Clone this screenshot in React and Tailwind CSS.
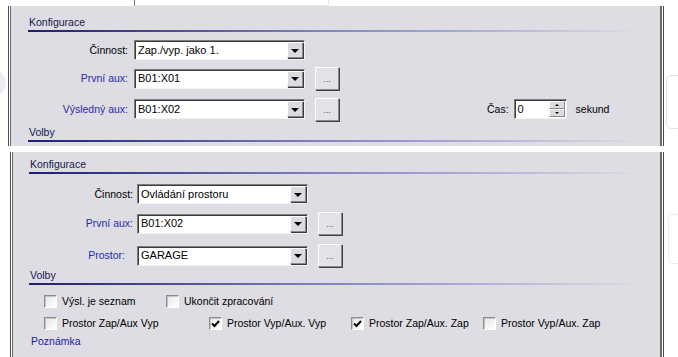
import React from "react";

function Header({ title, className }) {
  return (
    <div className={className}>
      <div className="pl-[1px] leading-[13px] text-[10.5px] text-[#17174f]">{title}</div>
      <div className="mt-[1px] h-[2px] bg-linear-to-r from-[#1e1e70] via-[#8787c2] to-[#dddde3]" />
    </div>
  );
}

function ArrowBtn() {
  return (
    <span className="w-[16px] h-[16px] mr-[1px] flex items-center justify-center bg-[#dcdce0] border border-t-white border-l-white border-b-[#8a8a8a] border-r-[#8a8a8a] shadow-[1px_1px_0_#3a3a3a]">
      <span className="mt-[1px] w-0 h-0 border-x-[4px] border-x-transparent border-t-[4px] border-t-black" />
    </span>
  );
}

function Select({ value, width }) {
  return (
    <div
      className={`${width} h-[20px] flex items-center bg-white border border-t-[#7c7c7c] border-l-[#7c7c7c] border-b-[#f4f4f4] border-r-[#f4f4f4] shadow-[inset_1px_1px_0_#3c3c3c]`}
    >
      <span className="flex-1 pl-[3px] text-[11px] text-black leading-none whitespace-nowrap">
        {value}
      </span>
      <ArrowBtn />
    </div>
  );
}

function DotsBtn() {
  return (
    <div className="w-[24px] h-[23px] ml-[10px] flex items-end justify-center pb-[5px] bg-[#e3e3e7] border border-t-white border-l-white border-b-[#8a8a8a] border-r-[#8a8a8a] shadow-[1px_1px_0_#404040]">
      <span className="text-[9px] leading-none text-[#555]">...</span>
    </div>
  );
}

function Check({ checked }) {
  return (
    <span className="w-[13px] h-[13px] shrink-0 flex items-center justify-center bg-linear-to-br from-[#e6e6e6] to-white border border-t-[#8c8c8c] border-l-[#8c8c8c] border-b-white border-r-white shadow-[inset_1px_1px_0_#c4c4c4]">
      {checked && (
        <svg width="9" height="8" viewBox="0 0 9 8">
          <path d="M1 3.5 L3.5 6 L8 1" stroke="#000" strokeWidth="2" fill="none" />
        </svg>
      )}
    </span>
  );
}

function CheckItem({ label, checked, width }) {
  return (
    <div className={`${width} flex items-center h-[13px]`}>
      <Check checked={checked} />
      <span className="ml-[5px] text-[10.5px] leading-none text-black whitespace-nowrap">{label}</span>
    </div>
  );
}

function Label({ text, blue, width, extra }) {
  return (
    <span
      className={`${width} ${extra} shrink-0 text-right text-[10.5px] leading-none whitespace-nowrap ${
        blue ? "text-[#2a2aa6]" : "text-black"
      }`}
    >
      {text}
    </span>
  );
}

function Spinner() {
  return (
    <div className="w-[53px] h-[20px] flex items-center bg-white border border-t-[#7c7c7c] border-l-[#7c7c7c] border-b-[#f4f4f4] border-r-[#f4f4f4] shadow-[inset_1px_1px_0_#3c3c3c]">
      <span className="flex-1 pl-[3px] text-[11px] leading-none">0</span>
      <div className="w-[16px] h-[16px] mr-[1px] flex flex-col">
        <span className="flex-1 flex items-center justify-center bg-[#dcdce0] border border-t-white border-l-white border-b-[#8a8a8a] border-r-[#8a8a8a]">
          <span className="w-0 h-0 border-x-[2px] border-x-transparent border-b-[2px] border-b-black" />
        </span>
        <span className="flex-1 flex items-center justify-center bg-[#dcdce0] border border-t-white border-l-white border-b-[#8a8a8a] border-r-[#8a8a8a]">
          <span className="w-0 h-0 border-x-[2px] border-x-transparent border-t-[2px] border-t-black" />
        </span>
      </div>
    </div>
  );
}

function Frame({ outer, height, children }) {
  return (
    <div className={`${outer} ${height} border-x border-[#4a4a4a] bg-white px-[1px]`}>
      <div className="h-full border-l border-r-2 border-[#6a6a6a] bg-[#dddde3] overflow-hidden font-['Liberation_Sans',Arial,sans-serif]">
        {children}
      </div>
    </div>
  );
}

export default function App() {
  return (
    <div className="relative w-[678px] h-[357px] overflow-hidden bg-white font-['Liberation_Sans',Arial,sans-serif]">
      {/* faint shapes behind, from the desktop */}
      <div className="absolute left-[-20px] top-[70px] w-[26px] h-[26px] rounded-full bg-[#ececf4]" />
      <div className="absolute left-[666px] top-[75px] w-[30px] h-[54px] rounded-[5px] border border-[#e2e2ea]" />
      <div className="absolute left-[668px] top-[214px] w-[30px] h-[50px] rounded-[5px] border border-[#ececf0]" />

      {/* strip above the first form */}
      <div className="h-[6px]">
        <div className="ml-[134px] w-[195px] h-[6px] border-b border-r border-l border-l-[#707070] border-b-[#e6e6e6] border-r-[#e6e6e6]" />
      </div>

      {/* first form */}
      <Frame outer="ml-[8px] w-[656px]" height="h-[140px]">
        <Header title="Konfigurace" className="mt-[10px] ml-[17px] mr-[19px]" />

        <div className="mt-[8px] h-[20px] flex items-center">
          <Label text="Činnost:" width="w-[117px]" />
          <div className="ml-[6px]">
            <Select value="Zap./vyp. jako 1." width="w-[171px]" />
          </div>
        </div>

        <div className="mt-[7px] h-[23px] flex items-center">
          <Label text="První aux:" blue width="w-[117px]" />
          <div className="ml-[6px]">
            <Select value="B01:X01" width="w-[171px]" />
          </div>
          <DotsBtn />
        </div>

        <div className="mt-[7px] h-[24px] flex items-center">
          <Label text="Výsledný aux:" blue width="w-[117px]" />
          <div className="ml-[6px]">
            <Select value="B01:X02" width="w-[171px]" />
          </div>
          <DotsBtn />
          <span className="ml-[148px] text-[10.5px] leading-none">Čas:</span>
          <div className="ml-[5px]">
            <Spinner />
          </div>
          <span className="ml-[9px] text-[10.5px] leading-none">sekund</span>
        </div>

        <Header title="Volby" className="mt-[5px] ml-[17px] mr-[19px]" />
      </Frame>

      {/* gap between the two screenshots */}
      <div className="h-[6px]" />

      {/* second form */}
      <Frame outer="ml-[10px] w-[654px]" height="h-[210px]">
        <Header title="Konfigurace" className="mt-[6px] ml-[16px] mr-[19px]" />

        <div className="mt-[10px] h-[20px] flex items-center">
          <Label text="Činnost:" width="w-[120px]" />
          <div className="ml-[4px]">
            <Select value="Ovládání prostoru" width="w-[171px]" />
          </div>
        </div>

        <div className="mt-[8px] h-[23px] flex items-center">
          <Label text="První aux:" blue width="w-[120px]" />
          <div className="ml-[4px]">
            <Select value="B01:X02" width="w-[171px]" />
          </div>
          <DotsBtn />
        </div>

        <div className="mt-[9px] h-[23px] flex items-center">
          <Label text="Prostor:" blue width="w-[120px]" extra="pr-[8px]" />
          <div className="ml-[4px]">
            <Select value="GARAGE" width="w-[171px]" />
          </div>
          <DotsBtn />
        </div>

        <Header title="Volby" className="mt-[2px] ml-[16px] mr-[19px]" />

        <div className="mt-[10px] pl-[31px] flex">
          <CheckItem label="Výsl. je seznam" width="w-[122px]" />
          <CheckItem label="Ukončit zpracování" width="w-[160px]" />
        </div>

        <div className="mt-[9px] pl-[31px] flex">
          <CheckItem label="Prostor Zap/Aux Vyp" width="w-[165px]" />
          <CheckItem label="Prostor Vyp/Aux. Vyp" checked width="w-[142px]" />
          <CheckItem label="Prostor Zap/Aux. Zap" checked width="w-[132px]" />
          <CheckItem label="Prostor Vyp/Aux. Zap" width="w-[130px]" />
        </div>

        <div className="mt-[5px] ml-[18px] leading-[13px] text-[10.5px] text-[#1c1ca0]">Poznámka</div>
      </Frame>
    </div>
  );
}
